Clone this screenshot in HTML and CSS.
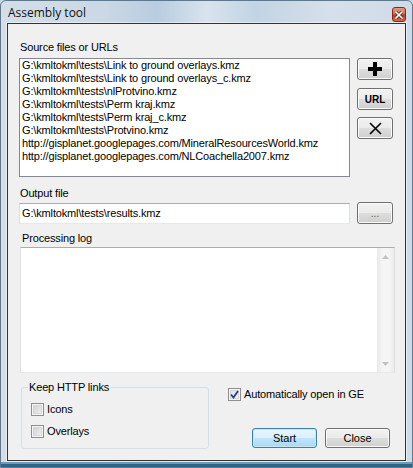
FILE: index.html
```html
<!DOCTYPE html>
<html lang="en">

<head>
    <meta charset="UTF-8">
    <title>Assembly tool</title>
    <link rel="stylesheet" href="styles.css">
</head>

<body>

    <div class="window">
        <div class="titlebar">
            <span class="title">Assembly tool</span>
            <span class="close-btn">
                <svg width="8" height="8" viewBox="0 0 8 8">
                    <path d="M1 1 L7 7 M7 1 L1 7" stroke="#5a1a12" stroke-width="3" stroke-linecap="square" />
                    <path d="M1 1 L7 7 M7 1 L1 7" stroke="#fff" stroke-width="1.6" stroke-linecap="square" />
                </svg>
            </span>
        </div>

        <div class="client">
            <div class="label lbl-source">Source files or URLs</div>
            <div class="row">
                <div class="listbox">
                    <div>G:\kmltokml\tests\Link to ground overlays.kmz</div>
                    <div>G:\kmltokml\tests\Link to ground overlays_c.kmz</div>
                    <div>G:\kmltokml\tests\nlProtvino.kmz</div>
                    <div>G:\kmltokml\tests\Perm kraj.kmz</div>
                    <div>G:\kmltokml\tests\Perm kraj_c.kmz</div>
                    <div>G:\kmltokml\tests\Protvino.kmz</div>
                    <div>http://gisplanet.googlepages.com/MineralResourcesWorld.kmz</div>
                    <div>http://gisplanet.googlepages.com/NLCoachella2007.kmz</div>
                </div>
                <div class="side-buttons">
                    <button class="btn">
                        <svg width="14" height="14" viewBox="0 0 14 14">
                            <path d="M5 0 H9 V5 H14 V9 H9 V14 H5 V9 H0 V5 H5 Z" fill="#000" />
                        </svg>
                    </button>
                    <button class="btn btn-url">URL</button>
                    <button class="btn btn-del">
                        <svg width="13" height="13" viewBox="0 0 13 13">
                            <path d="M1 1 L12 12 M12 1 L1 12" stroke="#000" stroke-width="1.6" />
                        </svg>
                    </button>
                </div>
            </div>

            <div class="label lbl-output">Output file</div>
            <div class="row">
                <div class="textbox">G:\kmltokml\tests\results.kmz</div>
                <button class="btn btn-browse">...</button>
            </div>

            <div class="label lbl-log">Processing log</div>
            <div class="logbox">
                <div class="log-area"></div>
                <div class="scrollbar">
                    <svg width="7" height="4" viewBox="0 0 7 4"><path d="M0 4 L3.5 0 L7 4 Z" fill="#c2c2c2" /></svg>
                    <svg width="7" height="4" viewBox="0 0 7 4"><path d="M0 0 L3.5 4 L7 0 Z" fill="#c2c2c2" /></svg>
                </div>
            </div>

            <div class="bottom">
                <fieldset class="group">
                    <legend>Keep HTTP links</legend>
                    <div class="check check-icons"><span class="box"></span>Icons</div>
                    <div class="check check-overlays"><span class="box"></span>Overlays</div>
                </fieldset>
                <div class="right-panel">
                    <div class="check">
                        <span class="box checked">
                            <svg width="9" height="9" viewBox="0 0 9 9">
                                <path d="M1 4.5 L3.5 7.5 L8 1" fill="none" stroke="#2a3f7a" stroke-width="1.8" />
                            </svg>
                        </span>Automatically open in GE
                    </div>
                    <div class="actions">
                        <button class="btn btn-start">Start</button>
                        <button class="btn btn-close">Close</button>
                    </div>
                </div>
            </div>
        </div>
    </div>

</body>

</html>
```

FILE: styles.css
```css
* {
    margin: 0;
    padding: 0;
    box-sizing: border-box;
}

body {
    width: 413px;
    height: 468px;
    overflow: hidden;
    background: #c9d8e6;
    font-family: "Liberation Sans", Arial, sans-serif;
    font-size: 11px;
    letter-spacing: -0.15px;
    color: #000;
}

.window {
    width: 413px;
    height: 468px;
    display: flex;
    flex-direction: column;
    border: 1px solid #5d7891;
    border-radius: 6px 6px 0 0;
    background: linear-gradient(to right, #d3dee9 0%, #cbd8e5 25%, #b8cde0 38%, #d8e3ed 50%, #c2d4e4 62%, #d5e0ea 80%, #cfdbe7 100%);
    box-shadow: inset 0 -3px 0 #2e6585, inset 0 -5px 0 #6c9bb8;
}

.titlebar {
    height: 22px;
    display: flex;
    align-items: center;
    justify-content: space-between;
    padding: 0 6px 0 7px;
}

.title {
    font-family: "Open Sans", "Noto Sans", sans-serif;
    font-size: 12px;
    letter-spacing: 0;
    color: #111;
}

.close-btn {
    width: 14px;
    height: 15px;
    display: flex;
    align-items: center;
    justify-content: center;
    border: 1px solid #7a2d22;
    border-radius: 3px;
    background: linear-gradient(#e59a8a 0%, #d16a55 45%, #b83a24 55%, #cf6a4c 100%);
    margin-top: 5px;
}

.client {
    flex: 1;
    margin: 0 6px 6px 6px;
    border: 1px solid #333;
    background: #f0f0f0;
    box-shadow: 0 0 0 1px rgba(255, 255, 255, 0.5);
    padding-top: 17px;
}

.label {
    line-height: 13px;
    height: 13px;
}

.lbl-source {
    margin-left: 12px;
}

.lbl-output {
    margin: 10px 0 0 12px;
}

.lbl-log {
    margin: 8px 0 0 14px;
}

.row {
    display: flex;
    margin-top: 4px;
    margin-left: 11px;
}

.listbox {
    width: 331px;
    height: 119px;
    background: #fff;
    border: 1px solid #828790;
    padding-left: 2px;
    line-height: 13px;
    white-space: nowrap;
}

.side-buttons {
    display: flex;
    flex-direction: column;
    margin-left: 7px;
}

.btn {
    font-family: "Liberation Sans", Arial, sans-serif;
    font-size: 11px;
    color: #000;
    border: 1px solid #707070;
    border-radius: 3px;
    background: linear-gradient(#f2f2f2 0%, #ebebeb 48%, #dddddd 52%, #cfcfcf 100%);
    box-shadow: inset 0 0 0 1px #fbfbfb;
    display: flex;
    align-items: center;
    justify-content: center;
}

.side-buttons .btn {
    width: 36px;
    height: 22px;
}

.btn-url {
    margin-top: 8px;
    font-weight: bold;
    font-size: 10px;
}

.btn-del {
    margin-top: 7px;
}

.lbl-output + .row {
    margin-top: 2px;
}

.textbox {
    width: 331px;
    height: 21px;
    margin-top: 1px;
    background: #fff;
    border: 1px solid #dbdfe6;
    border-top-color: #abadb3;
    border-bottom-color: #e3e9ef;
    padding: 3px 0 0 2px;
    line-height: 13px;
}

.btn-browse {
    width: 36px;
    height: 22px;
    margin-left: 7px;
    color: #555;
    align-items: flex-end;
    padding-bottom: 4px;
    font-size: 10px;
}

.logbox {
    display: flex;
    width: 375px;
    height: 126px;
    margin: 2px 0 0 12px;
    background: #fff;
    border: 1px solid #dbdfe6;
    border-top-color: #abadb3;
    border-bottom-color: #e3e9ef;
}

.log-area {
    flex: 1;
}

.scrollbar {
    width: 17px;
    background: linear-gradient(to right, #e8e8e8, #f5f5f5 30%, #f5f5f5 70%, #ececec);
    display: flex;
    flex-direction: column;
    justify-content: space-between;
    align-items: center;
    padding: 7px 0 6px;
}

.bottom {
    display: flex;
    margin-top: 8px;
}

.group {
    width: 188px;
    height: 68px;
    margin-left: 13px;
    border: 1px solid #d5dfe5;
    border-radius: 3px;
    padding: 0;
}

.group legend {
    margin-left: 6px;
    padding: 0 1px;
    line-height: 13px;
}

.check {
    display: flex;
    align-items: center;
    line-height: 13px;
}

.group .check {
    padding-left: 9px;
}

.check-icons {
    margin-top: 9px;
}

.check-overlays {
    margin-top: 9px;
}

.box {
    width: 13px;
    height: 13px;
    margin-right: 3px;
    border: 1px solid #8f8f8f;
    background: linear-gradient(135deg, #cbcbcb, #f6f6f6);
    box-shadow: inset 0 0 0 1px #f4f4f4, inset 0 0 0 2px #d8d8d8;
    display: flex;
    align-items: center;
    justify-content: center;
}

.box.checked {
    background: linear-gradient(135deg, #d6dbe6, #f7f8fa);
}

.right-panel {
    flex: 1;
    margin-left: 19px;
    padding-top: 7px;
    display: flex;
    flex-direction: column;
}

.actions {
    display: flex;
    gap: 8px;
    margin: 27px 0 0 24px;
}

.actions .btn {
    width: 65px;
    height: 20px;
}

.btn-start {
    border-color: #3c7fb1;
    background: linear-gradient(#eaf6fd 0%, #d9f0fc 48%, #bee6fd 52%, #a7d9f5 100%);
    box-shadow: inset 0 0 0 1px #c6e4f6;
}
```
